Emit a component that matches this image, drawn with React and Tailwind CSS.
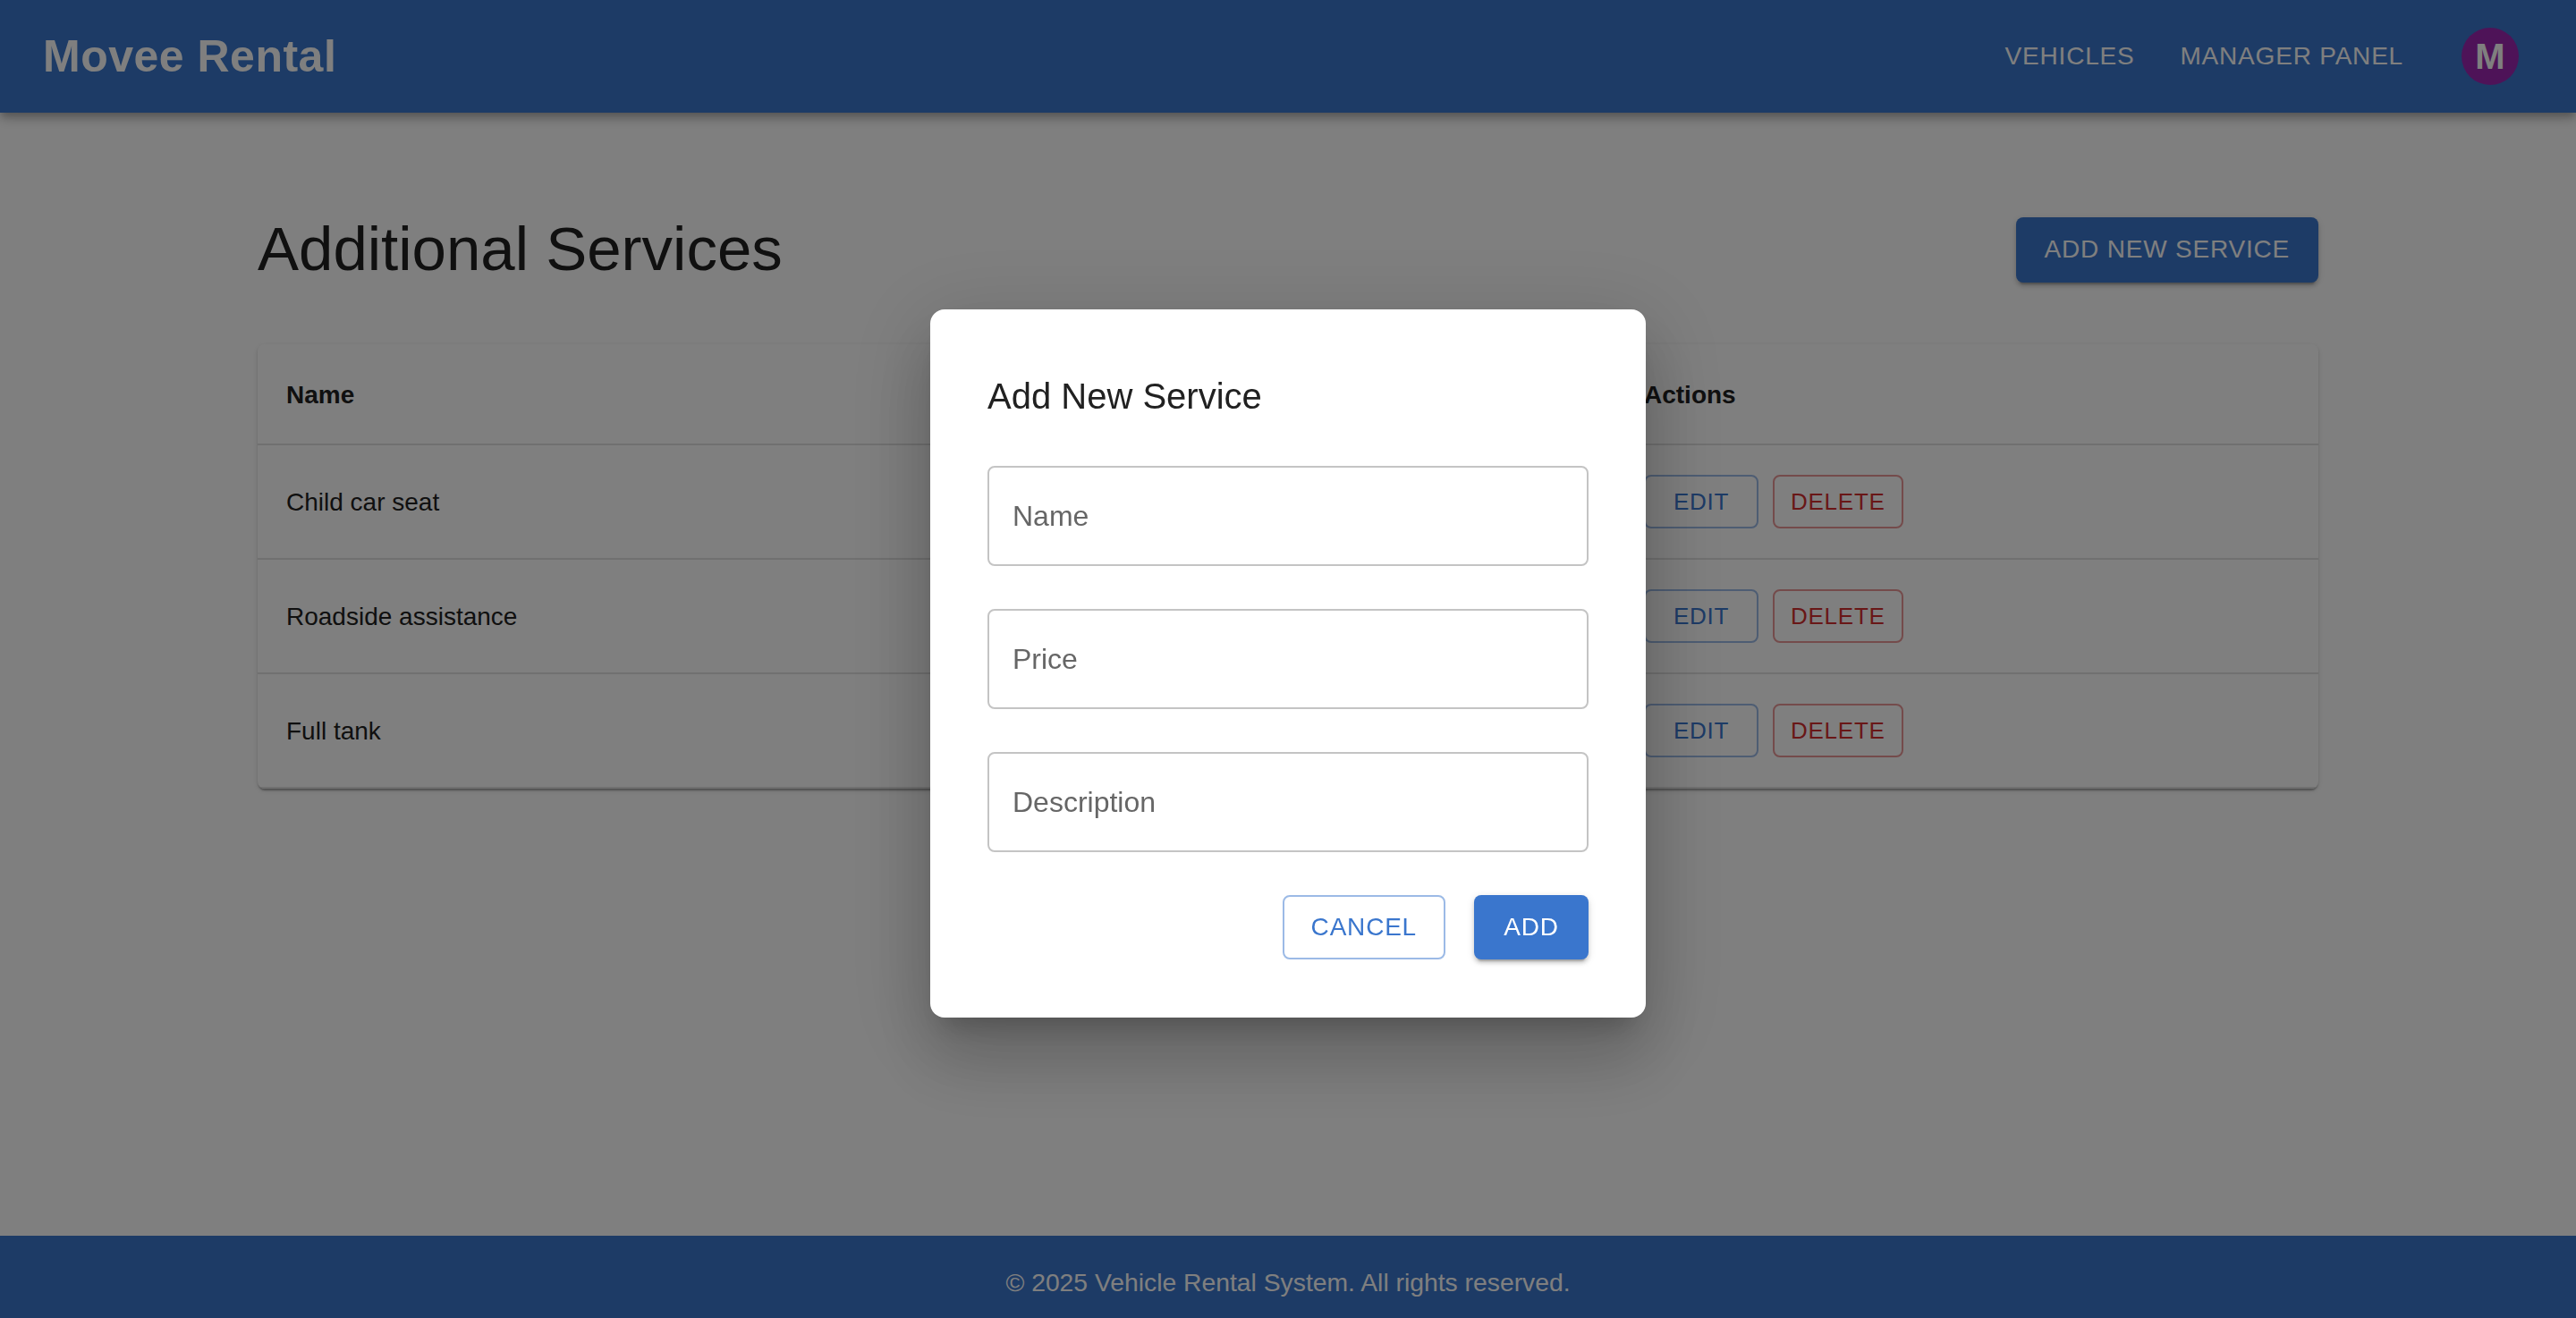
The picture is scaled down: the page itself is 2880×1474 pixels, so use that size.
import React from "react";

const services = [
  { id: 1, name: "Child car seat" },
  { id: 2, name: "Roadside assistance" },
  { id: 3, name: "Full tank" },
];

function NavBar() {
  return (
    <header className="relative z-10 h-[126px] shrink-0 bg-[#3a76cd] flex items-center justify-between pl-[48px] pr-[64px] shadow-[0_4px_8px_-2px_rgba(0,0,0,0.2),0_8px_10px_0_rgba(0,0,0,0.14),0_2px_20px_0_rgba(0,0,0,0.12)]">
      <div className="text-[50px] font-bold tracking-[0.01em] text-white">Movee Rental</div>
      <div className="flex items-center">
        <button className="px-[16px] h-[72px] text-[28px] uppercase tracking-[0.02857em] text-white">Vehicles</button>
        <button className="ml-[19px] px-[16px] h-[72px] text-[28px] uppercase tracking-[0.02857em] text-white">Manager Panel</button>
        <div className="ml-[49px] w-[64px] h-[64px] rounded-full bg-[#9c27b0] flex items-center justify-center text-[40px] font-bold text-white">M</div>
      </div>
    </header>
  );
}

function ServiceRow({ service }) {
  return (
    <div className="grid grid-cols-[1518px_1fr] h-[128px] border-b-2 border-[#e0e0e0]">
      <div className="px-[32px] pt-[2px] flex items-center text-[28px] text-[#212121]">{service.name}</div>
      <div className="px-[32px] flex items-center gap-[16px]">
        <button className="h-[60px] min-w-[128px] px-[18px] rounded-[8px] border-2 border-[#3a76cd]/50 text-[26px] tracking-[0.02857em] text-[#3a76cd]">EDIT</button>
        <button className="h-[60px] min-w-[128px] px-[18px] rounded-[8px] border-2 border-[#d32f2f]/50 text-[26px] tracking-[0.02857em] text-[#d32f2f]">DELETE</button>
      </div>
    </div>
  );
}

function AddServiceDialog() {
  return (
    <div className="fixed inset-0 z-20 bg-black/50 flex items-center justify-center pt-[10px]">
      <div className="w-[800px] rounded-[16px] bg-white px-[64px] pt-[65px] pb-[65px] flex flex-col shadow-[0_22px_30px_-14px_rgba(0,0,0,0.2),0_48px_76px_6px_rgba(0,0,0,0.14),0_18px_92px_16px_rgba(0,0,0,0.12)]">
        <h2 className="text-[40px] leading-[64px] text-[#212121]">Add New Service</h2>
        <div className="mt-[46px] flex flex-col gap-[48px]">
          {["Name", "Price", "Description"].map((label) => (
            <input
              key={label}
              placeholder={label}
              className="h-[112px] w-full rounded-[8px] border-2 border-[#c4c4c4] px-[26px] text-[32px] text-[#212121] placeholder:text-[#666666] outline-none"
            />
          ))}
        </div>
        <div className="mt-[48px] flex justify-end gap-[32px]">
          <button className="h-[72px] px-[30px] rounded-[8px] border-2 border-[#3a76cd]/50 text-[28px] tracking-[0.02857em] text-[#3a76cd]">CANCEL</button>
          <button className="h-[72px] min-w-[128px] px-[32px] rounded-[8px] bg-[#3a76cd] text-[28px] tracking-[0.02857em] text-white shadow-[0_6px_2px_-4px_rgba(0,0,0,0.2),0_4px_4px_0_rgba(0,0,0,0.14),0_2px_10px_0_rgba(0,0,0,0.12)]">ADD</button>
        </div>
      </div>
    </div>
  );
}

export default function App() {
  return (
    <div className="h-screen overflow-hidden flex flex-col bg-white font-['Liberation_Sans',Arial,sans-serif]">
      <NavBar />

      <main className="flex-1">
        <div className="mx-auto w-[2304px] pt-[111px]">
          <div className="h-[84px] flex items-center justify-between">
            <h1 className="text-[69px] leading-[84px] text-[#212121]">Additional Services</h1>
            <button className="h-[73px] px-[32px] rounded-[8px] bg-[#3a76cd] text-[28px] tracking-[0.02857em] text-white shadow-[0_6px_2px_-4px_rgba(0,0,0,0.2),0_4px_4px_0_rgba(0,0,0,0.14),0_2px_10px_0_rgba(0,0,0,0.12)]">
              ADD NEW SERVICE
            </button>
          </div>

          <div className="mt-[64px] rounded-[8px] bg-white overflow-hidden shadow-[0_4px_2px_-2px_rgba(0,0,0,0.2),0_2px_2px_0_rgba(0,0,0,0.14),0_2px_6px_0_rgba(0,0,0,0.12)]">
            <div className="grid grid-cols-[1518px_1fr] h-[113px] border-b-2 border-[#e0e0e0]">
              <div className="px-[32px] pt-[2px] flex items-center text-[28px] font-bold text-[#212121]">Name</div>
              <div className="px-[32px] pt-[2px] flex items-center text-[28px] font-bold text-[#212121]">Actions</div>
            </div>
            {services.map((s) => (
              <ServiceRow key={s.id} service={s} />
            ))}
          </div>
        </div>
      </main>

      <footer className="h-[92px] shrink-0 bg-[#3a76cd] pt-[32px] text-center text-[28.3px] leading-[40px] text-white">
        © 2025 Vehicle Rental System. All rights reserved.
      </footer>

      <AddServiceDialog />
    </div>
  );
}
